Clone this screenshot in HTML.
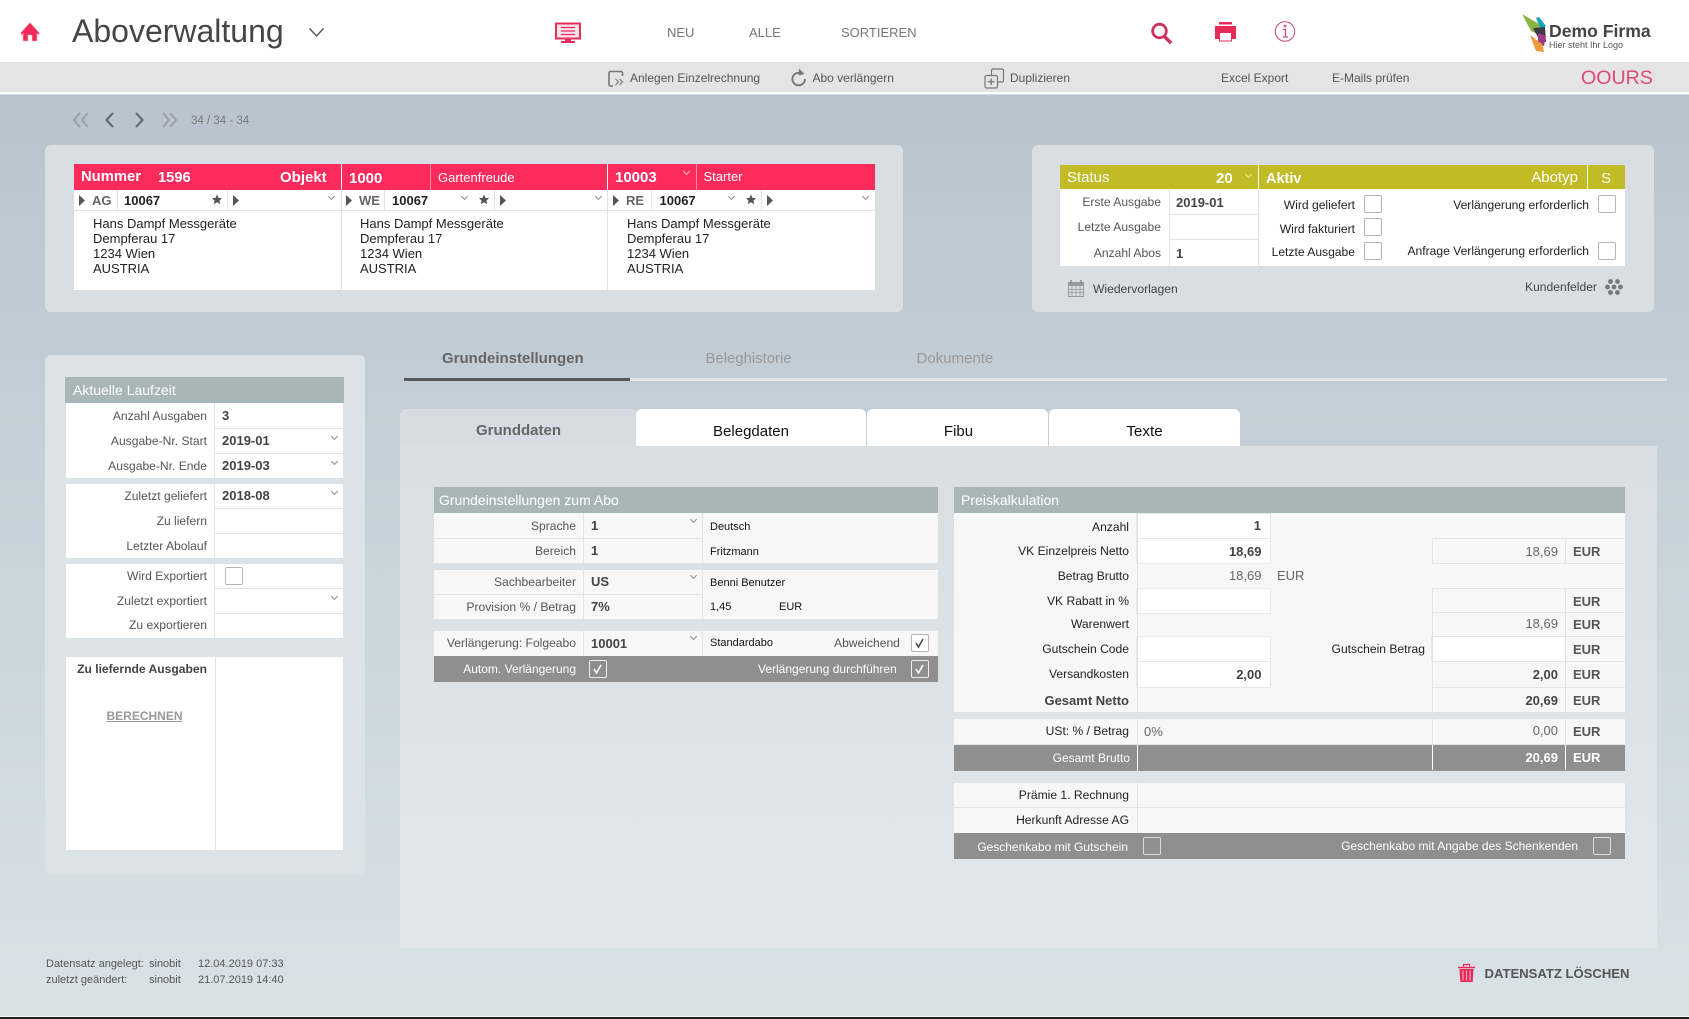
<!DOCTYPE html>
<html lang="de"><head><meta charset="utf-8"><title>Aboverwaltung</title>
<style>
html,body{margin:0;padding:0;width:1689px;height:1019px;overflow:hidden;background:#d8e2e7}
#r{position:relative;width:1689px;height:1019px;overflow:hidden;font-family:"Liberation Sans",sans-serif;font-size:12px;color:#555;background:linear-gradient(#b8c2cc 0,#b9c3cd 95px,#c3ced6 400px,#d8e2e7 1017px)}
.b{position:absolute}
.t{position:absolute;white-space:nowrap;line-height:16px;height:16px}
.l{color:#555;font-size:12.1px}
.d{color:#222;font-size:12.1px}
.w{color:#fff}
.v{color:#444;font-size:13px;font-weight:bold}
.x{color:#111;font-size:11px}
.a{color:#222;font-size:13px}
.e{color:#555;font-size:13px;font-weight:bold;left:1573px}
.g{color:#666;font-size:13px}
.c{position:absolute;width:4px;height:4px;border-right:1px solid #8a8a8a;border-bottom:1px solid #8a8a8a;transform:rotate(45deg)}
.k{position:absolute;width:16px;height:16px;border:1px solid #b5b5b5;border-radius:2px;background:#fff}
.kw{background:transparent;border-color:#eee}
.f{background:#f7f7f7}
.ln{position:absolute;background:#e3e3e3}
.h{background:#a9b6b8}
.dk{background:#8f8f8f}
.tab{position:absolute;top:409px;height:37px;background:#fff;border-radius:6px 6px 0 0;text-align:center;font-size:15px;line-height:46px;color:#111}
.rd{color:#fff;font-size:15px;font-weight:bold}
.in{position:absolute;background:#fff;box-shadow:0 0 0 1px #e8e8e8}
</style></head><body><div id="r">

<div class="b" style="left:0;top:0;width:1689px;height:62px;background:#fff"></div>
<div class="b" style="left:0;top:62px;width:1689px;height:30px;background:#e4e4e4"></div>
<div class="b" style="left:0;top:92px;width:1689px;height:2px;background:#fff"></div>
<div class="b" style="left:0;top:94px;width:1689px;height:1px;background:#d5d9dc"></div>

<div class="t" style="left:72px;top:13px;height:36px;line-height:36px;font-size:32px;color:#454545">Aboverwaltung</div>
<div class="t" style="left:667px;top:25px;font-size:13px;color:#777">NEU</div>
<div class="t" style="left:749px;top:25px;font-size:13px;color:#777">ALLE</div>
<div class="t" style="left:841px;top:25px;font-size:13px;color:#777">SORTIEREN</div>
<div class="t" style="left:1549px;top:20px;height:22px;line-height:22px;font-size:17.6px;font-weight:bold;color:#444">Demo Firma</div>
<div class="t" style="left:1549px;top:37px;font-size:9px;color:#555">Hier steht Ihr Logo</div>

<div class="t" style="left:630px;top:70px;font-size:12px;color:#555">Anlegen Einzelrechnung</div>
<div class="t" style="left:812.5px;top:70px;font-size:12px;color:#555">Abo verlängern</div>
<div class="t" style="left:1010px;top:70px;font-size:12px;color:#555">Duplizieren</div>
<div class="t" style="left:1221px;top:70px;font-size:12px;color:#555">Excel Export</div>
<div class="t" style="left:1332px;top:70px;font-size:12px;color:#555">E-Mails prüfen</div>
<div class="t" style="left:1581px;top:68px;height:20px;line-height:20px;font-size:19.6px;color:#de4a72">OOURS</div>

<div class="t" style="left:191px;top:113px;font-size:11.5px;color:#7a7a7a">34 / 34 - 34</div>

<!-- panel 1 -->
<div class="b" style="left:45px;top:145px;width:858px;height:167px;background:#d8dee2;border-radius:6px"></div>
<div class="b" style="left:74px;top:164px;width:801px;height:26px;background:#fc2b5c"></div>
<div class="b" style="left:74px;top:190px;width:801px;height:100px;background:#fff"></div>
<div class="ln" style="left:74px;top:210px;width:801px;height:1px"></div>
<div class="b" style="left:341px;top:164px;width:1px;height:26px;background:#fff"></div>
<div class="b" style="left:430px;top:164px;width:1px;height:26px;background:#ff8ea9"></div>
<div class="b" style="left:607px;top:164px;width:1px;height:26px;background:#fff"></div>
<div class="b" style="left:696px;top:164px;width:1px;height:26px;background:#ff8ea9"></div>
<div class="ln" style="left:341px;top:190px;width:1px;height:100px"></div>
<div class="ln" style="left:607px;top:190px;width:1px;height:100px"></div>
<div class="ln" style="left:117px;top:190px;width:1px;height:20px"></div>
<div class="ln" style="left:227px;top:190px;width:1px;height:20px"></div>
<div class="ln" style="left:384px;top:190px;width:1px;height:20px"></div>
<div class="ln" style="left:494px;top:190px;width:1px;height:20px"></div>
<div class="ln" style="left:651px;top:190px;width:1px;height:20px"></div>
<div class="ln" style="left:761px;top:190px;width:1px;height:20px"></div>

<div class="t rd" style="left:81px;top:169px;font-size:14.8px">Nummer</div>
<div class="t rd" style="left:158px;top:170px;font-size:14.7px">1596</div>
<div class="t rd" style="left:280px;top:170px">Objekt</div>
<div class="t rd" style="left:349px;top:171px">1000</div>
<div class="t w" style="left:438px;top:170px;font-size:13px">Gartenfreude</div>
<div class="t rd" style="left:615px;top:170px">10003</div>
<div class="c" style="left:684px;top:169px;border-color:#ffc0cf"></div>
<div class="t w" style="left:703.500px;top:169px;font-size:13px">Starter</div>

<div class="t" style="left:92px;top:193px;font-size:13px;font-weight:bold;color:#666">AG</div>
<div class="t" style="left:124px;top:193px;font-size:13px;font-weight:bold;color:#222">10067</div>
<div class="c" style="left:329px;top:194px"></div>
<div class="t" style="left:359px;top:193px;font-size:13px;font-weight:bold;color:#666">WE</div>
<div class="t" style="left:392px;top:193px;font-size:13px;font-weight:bold;color:#222">10067</div>
<div class="c" style="left:462px;top:194px"></div>
<div class="c" style="left:596px;top:194px"></div>
<div class="t" style="left:626px;top:193px;font-size:13px;font-weight:bold;color:#666">RE</div>
<div class="t" style="left:659.5px;top:193px;font-size:13px;font-weight:bold;color:#222">10067</div>
<div class="c" style="left:729px;top:194px"></div>
<div class="c" style="left:863px;top:194px"></div>

<div class="t a" style="left:93px;top:216px">Hans Dampf Messgeräte</div>
<div class="t a" style="left:93px;top:231px">Dempferau 17</div>
<div class="t a" style="left:93px;top:246px">1234 Wien</div>
<div class="t a" style="left:93px;top:261px">AUSTRIA</div>
<div class="t a" style="left:360px;top:216px">Hans Dampf Messgeräte</div>
<div class="t a" style="left:360px;top:231px">Dempferau 17</div>
<div class="t a" style="left:360px;top:246px">1234 Wien</div>
<div class="t a" style="left:360px;top:261px">AUSTRIA</div>
<div class="t a" style="left:627px;top:216px">Hans Dampf Messgeräte</div>
<div class="t a" style="left:627px;top:231px">Dempferau 17</div>
<div class="t a" style="left:627px;top:246px">1234 Wien</div>
<div class="t a" style="left:627px;top:261px">AUSTRIA</div>

<!-- panel 2 -->
<div class="b" style="left:1032px;top:145px;width:622px;height:167px;background:#d8dee2;border-radius:6px"></div>
<div class="b" style="left:1060px;top:165px;width:565px;height:24px;background:#c1bb25"></div>
<div class="b" style="left:1060px;top:189px;width:565px;height:77px;background:#fff"></div>
<div class="b" style="left:1258px;top:165px;width:1px;height:24px;background:#fff"></div>
<div class="b" style="left:1587px;top:165px;width:1px;height:24px;background:#fff"></div>
<div class="ln" style="left:1169px;top:189px;width:1px;height:77px"></div>
<div class="ln" style="left:1258px;top:189px;width:1px;height:77px"></div>
<div class="ln" style="left:1169px;top:214px;width:89px;height:1px"></div>
<div class="ln" style="left:1169px;top:239px;width:89px;height:1px"></div>
<div class="t w" style="left:1067px;top:170px;font-size:15px">Status</div>
<div class="t rd" style="left:1216px;top:171px">20</div>
<div class="c" style="left:1246px;top:172px;border-color:#efecb0"></div>
<div class="t rd" style="left:1266px;top:171px;font-size:14.5px">Aktiv</div>
<div class="t w" style="right:111px;top:170px;font-size:15px">Abotyp</div>
<div class="t w" style="left:1601px;top:171px;font-size:15px">S</div>

<div class="t l" style="right:528px;top:194px">Erste Ausgabe</div>
<div class="t l" style="right:528px;top:219px">Letzte Ausgabe</div>
<div class="t l" style="right:528px;top:245px">Anzahl Abos</div>
<div class="t v" style="left:1176px;top:195px">2019-01</div>
<div class="t v" style="left:1176px;top:246px">1</div>
<div class="t d" style="right:334px;top:197px">Wird geliefert</div>
<div class="t d" style="right:334px;top:221px">Wird fakturiert</div>
<div class="t d" style="right:334px;top:244px">Letzte Ausgabe</div>
<div class="k" style="left:1364px;top:195px"></div>
<div class="k" style="left:1364px;top:218px"></div>
<div class="k" style="left:1364px;top:242px"></div>
<div class="t d" style="right:100px;top:197px">Verlängerung erforderlich</div>
<div class="t d" style="right:100px;top:243px">Anfrage Verlängerung erforderlich</div>
<div class="k" style="left:1598px;top:195px"></div>
<div class="k" style="left:1598px;top:242px"></div>
<div class="t d" style="left:1093px;top:281px;color:#444">Wiedervorlagen</div>
<div class="t d" style="left:1525px;top:279px;color:#444">Kundenfelder</div>

<!-- left panel -->
<div class="b" style="left:45px;top:355px;width:320px;height:520px;background:#dce3e7;border-radius:6px"></div>
<div class="b h" style="left:65px;top:377px;width:279px;height:26px"></div>
<div class="t w" style="left:73px;top:382px;font-size:14px">Aktuelle Laufzeit</div>
<div class="b" style="left:66px;top:403px;width:277px;height:75px;background:#fff"></div>
<div class="b" style="left:66px;top:484px;width:277px;height:74px;background:#fff"></div>
<div class="b" style="left:66px;top:564px;width:277px;height:74px;background:#fff"></div>
<div class="b" style="left:66px;top:657px;width:277px;height:193px;background:#fff"></div>
<div class="ln" style="left:214px;top:403px;width:1px;height:75px"></div>
<div class="ln" style="left:214px;top:484px;width:1px;height:74px"></div>
<div class="ln" style="left:214px;top:564px;width:1px;height:74px"></div>
<div class="ln" style="left:215px;top:657px;width:1px;height:193px"></div>
<div class="ln" style="left:214px;top:428px;width:129px;height:1px"></div>
<div class="ln" style="left:214px;top:453px;width:129px;height:1px"></div>
<div class="ln" style="left:214px;top:508px;width:129px;height:1px"></div>
<div class="ln" style="left:214px;top:533px;width:129px;height:1px"></div>
<div class="ln" style="left:214px;top:588px;width:129px;height:1px"></div>
<div class="ln" style="left:214px;top:613px;width:129px;height:1px"></div>
<div class="t l" style="right:1482px;top:408px">Anzahl Ausgaben</div>
<div class="t l" style="right:1482px;top:433px">Ausgabe-Nr. Start</div>
<div class="t l" style="right:1482px;top:458px">Ausgabe-Nr. Ende</div>
<div class="t l" style="right:1482px;top:488px">Zuletzt geliefert</div>
<div class="t l" style="right:1482px;top:513px">Zu liefern</div>
<div class="t l" style="right:1482px;top:538px">Letzter Abolauf</div>
<div class="t l" style="right:1482px;top:568px">Wird Exportiert</div>
<div class="t l" style="right:1482px;top:593px">Zuletzt exportiert</div>
<div class="t l" style="right:1482px;top:617px">Zu exportieren</div>
<div class="t v" style="left:222px;top:408px">3</div>
<div class="t v" style="left:222px;top:433px">2019-01</div>
<div class="t v" style="left:222px;top:458px">2019-03</div>
<div class="t v" style="left:222px;top:488px">2018-08</div>
<div class="c" style="left:332px;top:434px"></div>
<div class="c" style="left:332px;top:459px"></div>
<div class="c" style="left:332px;top:489px"></div>
<div class="c" style="left:332px;top:594px"></div>
<div class="k" style="left:225px;top:567px"></div>
<div class="t" style="right:1482px;top:661px;font-size:12.1px;font-weight:bold;color:#444">Zu liefernde Ausgaben</div>
<div class="t" style="left:106.5px;top:708px;font-size:12px;font-weight:bold;color:#999;text-decoration:underline">BERECHNEN</div>

<!-- main tabs -->
<div class="t" style="left:442px;top:351px;font-size:15px;font-weight:bold;color:#666">Grundeinstellungen</div>
<div class="t" style="left:705.5px;top:351px;font-size:14.9px;color:#999">Beleghistorie</div>
<div class="t" style="left:916.5px;top:351px;font-size:15px;color:#999">Dokumente</div>
<div class="b" style="left:630px;top:378px;width:1037px;height:3px;background:#dfe4e7"></div>
<div class="b" style="left:404px;top:378px;width:226px;height:3px;background:#555a5e"></div>

<div class="b" style="left:400px;top:409px;width:237px;height:40px;background:#d6dce1;border-radius:6px 6px 0 0"></div>
<div class="b" style="left:400px;top:446px;width:1257px;height:502px;background:linear-gradient(#d8dee2,#e1e7ea)"></div>
<div class="t" style="left:476px;top:423px;font-size:15px;font-weight:bold;color:#666">Grunddaten</div>
<div class="tab" style="left:636px;width:230px">Belegdaten</div>
<div class="tab" style="left:867px;width:181px;text-indent:2px">Fibu</div>
<div class="tab" style="left:1049px;width:191px;font-size:15.2px">Texte</div>

<!-- left form -->
<div class="b h" style="left:434px;top:487px;width:504px;height:26px"></div>
<div class="t w" style="left:439px;top:492px;font-size:14px">Grundeinstellungen zum Abo</div>
<div class="b f" style="left:434px;top:513px;width:504px;height:50px"></div>
<div class="b f" style="left:434px;top:570px;width:504px;height:49px"></div>
<div class="b f" style="left:434px;top:631px;width:504px;height:25px"></div>
<div class="b dk" style="left:434px;top:656px;width:504px;height:26px"></div>
<div class="ln" style="left:583px;top:513px;width:1px;height:50px"></div>
<div class="ln" style="left:702px;top:513px;width:1px;height:50px"></div>
<div class="ln" style="left:583px;top:570px;width:1px;height:49px"></div>
<div class="ln" style="left:702px;top:570px;width:1px;height:49px"></div>
<div class="ln" style="left:583px;top:631px;width:1px;height:25px"></div>
<div class="ln" style="left:702px;top:631px;width:1px;height:25px"></div>
<div class="ln" style="left:434px;top:538px;width:268px;height:1px"></div>
<div class="ln" style="left:434px;top:594px;width:268px;height:1px"></div>
<div class="t l" style="right:1113px;top:518px">Sprache</div>
<div class="t l" style="right:1113px;top:543px">Bereich</div>
<div class="t l" style="right:1113px;top:574px">Sachbearbeiter</div>
<div class="t l" style="right:1113px;top:599px">Provision % / Betrag</div>
<div class="t l" style="right:1113px;top:635px">Verlängerung: Folgeabo</div>
<div class="t v" style="left:591px;top:518px">1</div>
<div class="t v" style="left:591px;top:543px">1</div>
<div class="t v" style="left:591px;top:574px">US</div>
<div class="t v" style="left:591px;top:599px">7%</div>
<div class="t v" style="left:591px;top:636px">10001</div>
<div class="c" style="left:691px;top:517px"></div>
<div class="c" style="left:691px;top:573px"></div>
<div class="c" style="left:691px;top:634px"></div>
<div class="t x" style="left:710px;top:519px">Deutsch</div>
<div class="t x" style="left:710px;top:544px">Fritzmann</div>
<div class="t x" style="left:710px;top:575px">Benni Benutzer</div>
<div class="t x" style="left:710px;top:599px">1,45</div>
<div class="t x" style="left:779px;top:599px">EUR</div>
<div class="t x" style="left:710px;top:635px">Standardabo</div>
<div class="t l" style="left:834px;top:635px">Abweichend</div>
<div class="k" style="left:911px;top:634px"></div>
<div class="t w" style="right:1113px;top:661px">Autom. Verlängerung</div>
<div class="k kw" style="left:589px;top:660px"></div>
<div class="t w" style="left:758px;top:661px">Verlängerung durchführen</div>
<div class="k kw" style="left:911px;top:660px"></div>

<!-- right form -->
<div class="b h" style="left:954px;top:487px;width:671px;height:26px"></div>
<div class="t w" style="left:961px;top:492px;font-size:14px">Preiskalkulation</div>
<div class="b f" style="left:954px;top:513px;width:671px;height:199px"></div>
<div class="b f" style="left:954px;top:719px;width:671px;height:25px"></div>
<div class="b dk" style="left:954px;top:745px;width:671px;height:26px"></div>
<div class="b f" style="left:954px;top:783px;width:671px;height:50px"></div>
<div class="b dk" style="left:954px;top:833px;width:671px;height:26px"></div>

<div class="in" style="left:1137px;top:514px;width:133px;height:24px"></div>
<div class="in" style="left:1137px;top:539px;width:133px;height:24px"></div>
<div class="in" style="left:1137px;top:589px;width:133px;height:24px"></div>
<div class="in" style="left:1137px;top:637px;width:133px;height:24px"></div>
<div class="in" style="left:1137px;top:662px;width:133px;height:25px"></div>
<div class="in" style="left:1432px;top:637px;width:133px;height:24px"></div>
<div class="ln" style="left:1137px;top:513px;width:1px;height:199px"></div>
<div class="ln" style="left:1137px;top:719px;width:1px;height:25px"></div>
<div class="ln" style="left:1137px;top:783px;width:1px;height:50px"></div>
<div class="ln" style="left:954px;top:807px;width:671px;height:1px"></div>
<div class="ln" style="left:1432px;top:538px;width:193px;height:1px"></div>
<div class="ln" style="left:1432px;top:563px;width:193px;height:1px"></div>
<div class="ln" style="left:1432px;top:588px;width:193px;height:1px"></div>
<div class="ln" style="left:1432px;top:612px;width:193px;height:1px"></div>
<div class="ln" style="left:1432px;top:636px;width:193px;height:1px"></div>
<div class="ln" style="left:1432px;top:661px;width:193px;height:1px"></div>
<div class="ln" style="left:1432px;top:687px;width:193px;height:1px"></div>
<div class="ln" style="left:1432px;top:538px;width:1px;height:25px"></div>
<div class="ln" style="left:1432px;top:588px;width:1px;height:124px"></div>
<div class="ln" style="left:1565px;top:538px;width:1px;height:25px"></div>
<div class="ln" style="left:1565px;top:588px;width:1px;height:124px"></div>
<div class="ln" style="left:1432px;top:719px;width:1px;height:25px"></div>
<div class="ln" style="left:1565px;top:719px;width:1px;height:25px"></div>
<div class="b" style="left:1137px;top:745px;width:1px;height:26px;background:#fff"></div>
<div class="b" style="left:1432px;top:745px;width:1px;height:25px;background:#fff"></div>
<div class="b" style="left:1565px;top:745px;width:1px;height:25px;background:#fff"></div>

<div class="t d" style="right:560px;top:519px">Anzahl</div>
<div class="t d" style="right:560px;top:543px">VK Einzelpreis Netto</div>
<div class="t d" style="right:560px;top:568px">Betrag Brutto</div>
<div class="t d" style="right:560px;top:593px">VK Rabatt in %</div>
<div class="t d" style="right:560px;top:616px">Warenwert</div>
<div class="t d" style="right:560px;top:641px">Gutschein Code</div>
<div class="t d" style="right:560px;top:666px">Versandkosten</div>
<div class="t" style="right:560px;top:693px;font-size:13px;font-weight:bold;color:#444">Gesamt Netto</div>
<div class="t d" style="right:560px;top:723px">USt: % / Betrag</div>
<div class="t w" style="right:559px;top:750px">Gesamt Brutto</div>
<div class="t d" style="right:560px;top:787px">Prämie 1. Rechnung</div>
<div class="t d" style="right:560px;top:812px">Herkunft Adresse AG</div>
<div class="t w" style="right:561px;top:839px">Geschenkabo mit Gutschein</div>
<div class="k kw" style="left:1143px;top:837px;border-color:#ddd"></div>
<div class="t w" style="right:111px;top:838px">Geschenkabo mit Angabe des Schenkenden</div>
<div class="k kw" style="left:1593px;top:837px;border-color:#ddd"></div>

<div class="t v" style="right:428px;top:518px">1</div>
<div class="t v" style="right:427.500px;top:544px">18,69</div>
<div class="t g" style="right:427.500px;top:568px">18,69</div>
<div class="t g" style="left:1277px;top:568px">EUR</div>
<div class="t v" style="right:427.500px;top:667px">2,00</div>
<div class="t g" style="left:1144px;top:724px">0%</div>
<div class="t g" style="right:131px;top:544px">18,69</div>
<div class="t g" style="right:131px;top:616px">18,69</div>
<div class="t v" style="right:131px;top:667px">2,00</div>
<div class="t v" style="right:131px;top:693px">20,69</div>
<div class="t g" style="right:131px;top:723px">0,00</div>
<div class="t v w" style="right:131px;top:750px;color:#fff">20,69</div>
<div class="t e" style="top:544px">EUR</div>
<div class="t e" style="top:594px">EUR</div>
<div class="t e" style="top:617px">EUR</div>
<div class="t e" style="top:642px">EUR</div>
<div class="t e" style="top:667px">EUR</div>
<div class="t e" style="top:693px">EUR</div>
<div class="t e" style="top:724px">EUR</div>
<div class="t e" style="top:750px;color:#fff">EUR</div>
<div class="t d" style="left:1273px;top:641px;width:152px;text-align:right">Gutschein Betrag</div>

<!-- footer -->
<div class="t" style="left:46px;top:956px;font-size:11px">Datensatz angelegt:</div>
<div class="t" style="left:149px;top:956px;font-size:11px">sinobit</div>
<div class="t" style="left:198px;top:956px;font-size:11px">12.04.2019 07:33</div>
<div class="t" style="left:46px;top:972px;font-size:11px">zuletzt geändert:</div>
<div class="t" style="left:149px;top:972px;font-size:11px">sinobit</div>
<div class="t" style="left:198px;top:972px;font-size:11px">21.07.2019 14:40</div>
<div class="t" style="left:1484.500px;top:965.500px;font-size:13.100px;font-weight:bold;color:#555">DATENSATZ LÖSCHEN</div>
<div class="b" style="left:0;top:1016px;width:1689px;height:1px;background:#f4f6f7"></div>
<div class="b" style="left:0;top:1017px;width:1689px;height:2px;background:#222"></div>

<!-- icons -->
<svg class="b" style="left:0;top:0" width="1689" height="1019" viewBox="0 0 1689 1019" fill="none">
 <!-- home -->
 <path d="M30 22.500 L20.500 33 L21.500 35 L23 33.500 V41 H28 V35 H32 V41 H37 V33.500 L38.500 35 L39.500 33Z" fill="#f3295a" stroke="#fbb5c8" stroke-width=".6"/>
 <!-- dropdown -->
 <path d="M309.5 28.5 L316.5 36 L323.5 28.5" stroke="#555" stroke-width="1.4"/>
 <!-- monitor -->
 <rect x="556" y="23.5" width="24" height="15" fill="#fde4ea" stroke="#e52e5c" stroke-width="2"/>
 <path d="M561 27.5h14M561 31h14M561 34.5h14" stroke="#e52e5c" stroke-width="1.2"/>
 <path d="M565 39h6v2h4v2h-14v-2h4z" fill="#e52e5c"/>
 <!-- search -->
 <circle cx="1159.5" cy="31" r="6.8" stroke="#cf2f5c" stroke-width="2.8"/>
 <path d="M1164.5 36.5 L1171 43" stroke="#cf2f5c" stroke-width="3.4"/>
 <!-- print -->
 <path d="M1219 22h13v2.500h-13z" fill="#e62b5b"/>
 <path d="M1215 26h21v13h-4v-7h-13v7h-4z" fill="#e62b5b"/>
 <rect x="1219.500" y="32.500" width="12" height="8.500" fill="#fff" stroke="#e62b5b"/>
 <!-- info -->
 <circle cx="1285" cy="31.500" r="9.700" stroke="#cc4a70" stroke-width="1"/>
 <circle cx="1285" cy="26" r="1.300" fill="#cc4a70"/>
 <path d="M1283 29.500h2.500v7.500M1283 37h5" stroke="#cc4a70" stroke-width="1.200"/>
 <!-- logo -->
 <path d="M1522 14 L1539 24 L1541 36 L1531 31Z" fill="#8bb33f"/>
 <path d="M1536 18 L1539 17 L1546 26 L1541 30Z" fill="#17a8b8"/>
 <path d="M1533 28 L1545 27 L1546 42 L1540 41Z" fill="#3c3a48"/>
 <path d="M1538 33 L1546 36 L1544 46 L1538 44Z" fill="#a23a88"/>
 <path d="M1530 35 L1542 44 L1544 52 L1536 51Z" fill="#ee9a35"/>
 <!-- toolbar icons -->
 <path d="M613 86h-2.500a1.500 1.500 0 0 1-1.500-1.500V73a1.500 1.500 0 0 1 1.500-1.500H621a1.500 1.500 0 0 1 1.500 1.500v3" stroke="#777" stroke-width="1.600"/>
 <path d="M615.500 79l3 3-3 3M619.500 79l3 3-3 3" stroke="#777" stroke-width="1.100"/>
 <path d="M802.500 74a6.300 6.300 0 1 0 2.500 5" stroke="#777" stroke-width="1.900"/>
 <path d="M799 68.500l5.500 5.500-6 1.500z" fill="#777"/>
 <rect x="991.500" y="69" width="12" height="13" rx="1.500" stroke="#777" stroke-width="1.200"/>
 <rect x="985" y="75.500" width="12.500" height="12.500" rx="1.500" fill="#e4e4e4" stroke="#777" stroke-width="1.200"/>
 <path d="M991.200 78.500v6.500M988 81.700h6.500" stroke="#777" stroke-width="1.300"/>
 <!-- pager -->
 <path d="M80 113l-6 7 6 7M88 113l-6 7 6 7" stroke="#9aa0a6" stroke-width="2"/>
 <path d="M113 113l-6.500 7 6.500 7" stroke="#5f6367" stroke-width="2"/>
 <path d="M136 113l6.500 7-6.500 7" stroke="#5f6367" stroke-width="2"/>
 <path d="M163 113l6 7-6 7M170 113l6 7-6 7" stroke="#9aa0a6" stroke-width="2"/>
 <!-- triangles -->
 <path d="M79 195l6 5.500-6 5.500zM233 195l6 5.500-6 5.500zM346 195l6 5.500-6 5.500zM500 195l6 5.500-6 5.500zM613 195l6 5.500-6 5.500zM767 195l6 5.500-6 5.500z" fill="#555"/>
 <!-- stars -->
 <path d="M217 194.500l1.500 3.400 3.600.3-2.700 2.400.8 3.600-3.200-1.900-3.200 1.900.8-3.600-2.700-2.400 3.600-.3z" fill="#555"/>
 <path d="M484 194.500l1.500 3.400 3.600.3-2.700 2.400.8 3.600-3.200-1.900-3.200 1.900.8-3.600-2.700-2.400 3.600-.3z" fill="#555"/>
 <path d="M751 194.500l1.500 3.400 3.600.3-2.700 2.400.8 3.600-3.200-1.900-3.200 1.900.8-3.600-2.700-2.400 3.600-.3z" fill="#555"/>
 <!-- calendar -->
 <rect x="1068.500" y="283.500" width="15" height="13" fill="#d8dee2" stroke="#999"/>
 <path d="M1068 282h16v4h-16z" fill="#999"/>
 <path d="M1071 280v3M1081 280v3" stroke="#888" stroke-width="1.500"/>
 <path d="M1068.500 289.500h15M1068.500 292.500h15M1072 286v10M1076 286v10M1080 286v10" stroke="#999" stroke-width=".8"/>
 <!-- flower dots -->
 <g fill="#777"><circle cx="1610.500" cy="281.500" r="2.400"/><circle cx="1617.500" cy="281.500" r="2.400"/><circle cx="1607.500" cy="287" r="2.400"/><circle cx="1620.500" cy="287" r="2.400"/><circle cx="1610.500" cy="292.500" r="2.400"/><circle cx="1617.500" cy="292.500" r="2.400"/><circle cx="1614" cy="287" r="2.400"/></g>
 <!-- checks -->
 <path d="M916 643l2.500 4 4.500-8" stroke="#444" stroke-width="1.500"/>
 <path d="M594 669l2.500 4 4.500-8" stroke="#fff" stroke-width="1.500"/>
 <path d="M916 669l2.500 4 4.500-8" stroke="#fff" stroke-width="1.500"/>
 <!-- trash -->
 <path d="M1458 967.500h17" stroke="#e62b5b" stroke-width="1.600"/>
 <path d="M1463.500 966.500v-2h6v2" stroke="#e62b5b" stroke-width="1.200"/>
 <path d="M1459.500 969h14l-.8 13h-12.400z" fill="#e62b5b"/>
 <path d="M1463 970.500v10M1466.500 970.500v10M1470 970.500v10" stroke="#f9b6c8" stroke-width="1"/>
</svg>
</div></body></html>
